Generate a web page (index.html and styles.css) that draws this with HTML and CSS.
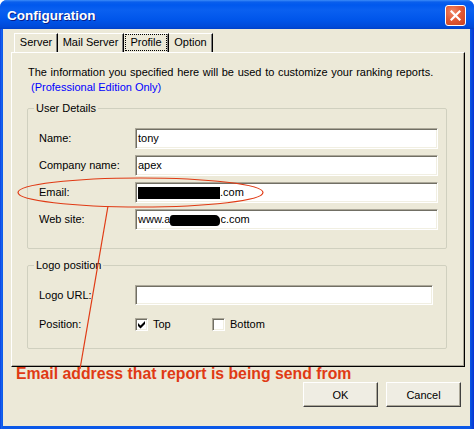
FILE: index.html
```html
<!DOCTYPE html>
<html>
<head>
<meta charset="utf-8">
<link rel="stylesheet" href="styles.css">
</head>
<body>
<div class="window">
  <div class="titlebar">
    <span class="title">Configuration</span>
    <span class="close">
      <svg width="11" height="11" viewBox="0 0 11 11"><path d="M1.5 1.5 L9.5 9.5 M9.5 1.5 L1.5 9.5" stroke="#fff" stroke-width="2.2" stroke-linecap="square"/></svg>
    </span>
  </div>
  <div class="client">
    <div class="tabs">
      <div class="tab t-server">Server</div>
      <div class="tab t-mail">Mail Server</div>
      <div class="tab t-profile"><span class="focus">Profile</span></div>
      <div class="tab t-option">Option</div>
    </div>
    <div class="panel">
      <p class="info">The information you specified here will be used to customize your ranking reports.<br><span class="pro">(Professional Edition Only)</span></p>
      <fieldset class="group user">
        <legend>User Details</legend>
        <div class="rows">
          <span class="lbl">Name:</span><div class="input">tony</div>
          <span class="lbl">Company name:</span><div class="input">apex</div>
          <span class="lbl">Email:</span><div class="input"><span class="redact r-email"></span>.com</div>
          <span class="lbl">Web site:</span><div class="input">www.a<span class="redact r-web"></span>c.com</div>
        </div>
      </fieldset>
      <fieldset class="group logo">
        <legend>Logo position</legend>
        <div class="rows logo-rows">
          <span class="lbl">Logo URL:</span><div class="input url"></div>
          <span class="lbl">Position:</span>
          <div class="checks">
            <span class="check c-top"><span class="box"><svg width="9" height="9" viewBox="0 0 9 9"><path d="M1 3 L3.5 5.5 L8 1 L8 4 L3.5 8.5 L1 6 Z" fill="#000"/></svg></span>Top</span>
            <span class="check"><span class="box"></span>Bottom</span>
          </div>
        </div>
      </fieldset>
    </div>
    <div class="buttons">
      <span class="btn">OK</span>
      <span class="btn">Cancel</span>
    </div>
  </div>
  <svg class="marks" width="474" height="429" viewBox="0 0 474 429">
    <ellipse cx="140.5" cy="192.5" rx="122.5" ry="14.5" fill="none" stroke="#E03A14" stroke-width="1.2"/>
    <line x1="108" y1="206" x2="80" y2="369" stroke="#E03A14" stroke-width="1.2"/>
  </svg>
  <div class="note">Email address that report is being send from</div>
</div>
</body>
</html>
```
FILE: styles.css
```css
html, body {
  margin: 0;
  padding: 0;
  background: #ffffff;
}
body {
  font-family: "Liberation Sans", Arial, sans-serif;
  font-size: 11px;
  color: #000;
}
.window {
  position: relative;
  width: 474px;
  height: 429px;
  display: flex;
  flex-direction: column;
  background: linear-gradient(to right, #0831D9 0, #1664F0 1px, #0A58E8 3px, #0A58E8 470px, #0847D6 472px, #0831D9 474px);
  border-radius: 7px 7px 0 0;
  overflow: hidden;
}
.titlebar {
  height: 29px;
  flex: none;
  display: flex;
  align-items: center;
  padding: 0 7px 0 7px;
  background: linear-gradient(#3C8CF8 0, #0A5FEC 2px, #0058EE 5px, #0A60F0 10px, #0055EA 20px, #004AD8 27px, #0040C8 29px);
}
.title {
  flex: 1;
  color: #fff;
  font-weight: bold;
  font-size: 13.5px;
  text-shadow: 1px 1px 0 #0A1E8A;
  margin-top: 2px;
}
.close {
  width: 19px;
  height: 19px;
  margin-top: 1px;
  margin-right: 1px;
  border: 1px solid #fff;
  border-radius: 3px;
  background: radial-gradient(circle at 35% 30%, #F08A6A 0, #E25A36 45%, #C8401E 100%);
  display: flex;
  align-items: center;
  justify-content: center;
}
.client {
  flex: 1;
  margin: 0 4px 3px 3px;
  background: #ECE9D8;
  display: flex;
  flex-direction: column;
}
.tabs {
  display: flex;
  margin: 4px 0 0 11px;
  height: 19px;
}
.tab {
  box-sizing: border-box;
  height: 19px;
  border-top: 1px solid #fff;
  border-left: 1px solid #fff;
  border-right: 1px solid #000;
  box-shadow: inset -1px 0 0 #808080;
  text-align: center;
  line-height: 17px;
}
.t-server { width: 44px; }
.t-mail { width: 66px; border-left: none; }
.t-profile { width: 45px; border-left: none; padding: 0 1px; }
.t-option { width: 44px; border-left: none; }
.focus {
  display: block;
  box-sizing: border-box;
  height: 17px;
  border: 1px dotted #000;
  line-height: 15px;
}
.panel {
  margin-left: 8px;
  width: 454px;
  height: 315px;
  box-sizing: border-box;
  border-top: 1px solid #fff;
  border-left: 1px solid #fff;
  border-right: 1px solid #000;
  border-bottom: 1px solid #000;
  box-shadow: inset -1px -1px 0 #ACA899;
  padding: 12px 0 0 0;
}
.info {
  margin: 0 0 0 16px;
  line-height: 15px;
  word-spacing: 0.6px;
}
.pro {
  color: #0000FF;
  margin-left: 3px;
  word-spacing: 0;
}
.group {
  margin: 7px 0 0 15px;
  width: 420px;
  box-sizing: border-box;
  border: 1px solid #D0D0BF;
  border-radius: 2px;
  padding: 13px 0 18px 11px;
}
.group legend {
  margin-left: -5px;
  padding: 0 2px;
  line-height: 13px;
}
.group.logo {
  margin-top: 10px;
  padding-bottom: 17px;
}
.rows {
  display: grid;
  grid-template-columns: 96px 303px;
  grid-auto-rows: 21px;
  row-gap: 6px;
  align-items: center;
}
.logo-rows {
  grid-template-columns: 96px 298px;
  grid-template-rows: 20px 13px;
  grid-auto-rows: auto;
  row-gap: 13px;
}
.lbl {
  line-height: 13px;
}
.input {
  box-sizing: border-box;
  height: 21px;
  background: #fff;
  border: 1px solid;
  border-color: #ACA899 #fff #fff #ACA899;
  box-shadow: inset 1px 1px 0 #716F64, inset -1px -1px 0 #F1EFE2;
  padding-left: 2px;
  line-height: 19px;
  white-space: nowrap;
  display: flex;
  align-items: center;
}
.input.url {
  height: 20px;
}
.redact {
  display: inline-block;
  background: #000;
}
.r-email {
  width: 82px;
  height: 12px;
}
.r-web {
  width: 50px;
  height: 11px;
  border-radius: 3px 5px 4px 3px;
  margin-top: 2px;
}
.checks {
  display: flex;
  align-items: center;
}
.check {
  display: flex;
  align-items: center;
  gap: 5px;
  line-height: 13px;
}
.c-top {
  width: 77px;
}
.box {
  width: 13px;
  height: 13px;
  box-sizing: border-box;
  background: #fff;
  border: 1px solid;
  border-color: #ACA899 #fff #fff #ACA899;
  box-shadow: inset 1px 1px 0 #716F64, inset -1px -1px 0 #F1EFE2;
  display: flex;
  align-items: center;
  justify-content: center;
}
.buttons {
  display: flex;
  justify-content: flex-end;
  gap: 8px;
  margin-top: 15px;
  padding-right: 9px;
}
.btn {
  width: 75px;
  height: 25px;
  box-sizing: border-box;
  background: #EFEDE3;
  border: 1px solid;
  border-color: #fff #404040 #404040 #fff;
  box-shadow: inset -1px -1px 0 #ACA899;
  display: flex;
  align-items: center;
  justify-content: center;
}
.marks {
  position: absolute;
  left: 0;
  top: 0;
  pointer-events: none;
}
.note {
  position: absolute;
  left: 16px;
  top: 365px;
  font-weight: bold;
  font-size: 15.8px;
  line-height: 18px;
  color: #E03A14;
  white-space: nowrap;
}
```
